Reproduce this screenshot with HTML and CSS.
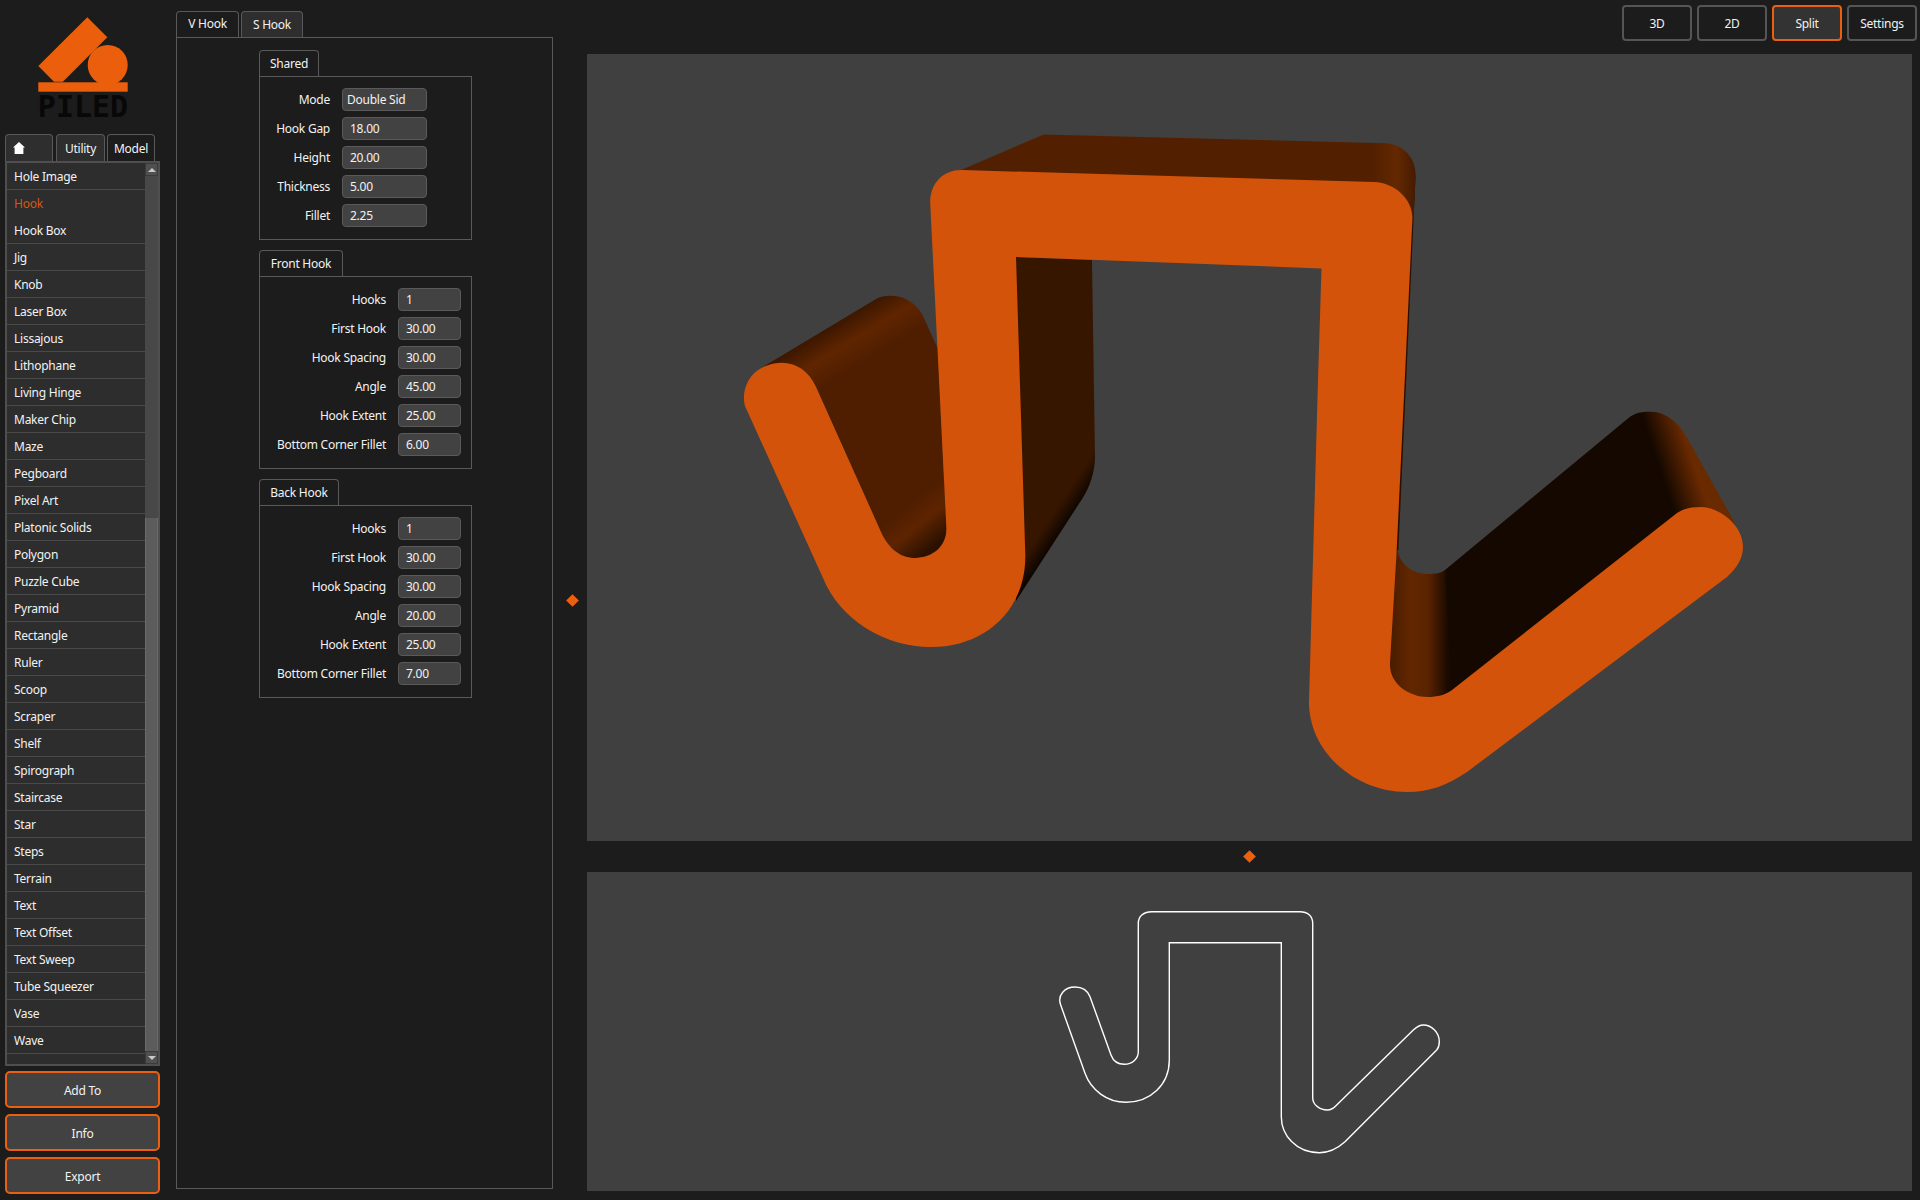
FILE: index.html
```html
<!DOCTYPE html>
<html lang="en">
<head>
  <meta charset="UTF-8">
  <title>PILED</title>
  <link rel="stylesheet" href="styles.css">
</head>
<body>
  <!-- Left column: logo, model list, actions -->
  <div class="left-col">
    <svg class="logo" viewBox="0 0 160 134" width="160" height="134">
      <polygon points="87.3,17.3 107.3,37.3 62.9,81.7 54,81.7 38.3,66" fill="#eb5e0b"/>
      <circle cx="107.7" cy="65" r="20" fill="#eb5e0b"/>
      <rect x="38.3" y="82.3" width="89.4" height="9.4" fill="#eb5e0b"/>
      <text x="83" y="117" class="logo-text" text-anchor="middle">PILED</text>
    </svg>

    <div class="tabs small-tabs">
      <div class="tab off home-tab">
        <svg viewBox="0 0 12 12" width="12" height="12"><path d="M6 0 L12 5.6 L10.4 5.6 L10.4 12 L1.6 12 L1.6 5.6 L0 5.6 Z" fill="#fff"/></svg>
      </div>
      <div class="tab off utility-tab">Utility</div>
      <div class="tab model-tab">Model</div>
    </div>

    <div class="list-frame">
      <div class="list">
        <div class="row">Hole Image</div>
        <div class="row active">Hook</div>
        <div class="row">Hook Box</div>
        <div class="row">Jig</div>
        <div class="row">Knob</div>
        <div class="row">Laser Box</div>
        <div class="row">Lissajous</div>
        <div class="row">Lithophane</div>
        <div class="row">Living Hinge</div>
        <div class="row">Maker Chip</div>
        <div class="row">Maze</div>
        <div class="row">Pegboard</div>
        <div class="row">Pixel Art</div>
        <div class="row">Platonic Solids</div>
        <div class="row">Polygon</div>
        <div class="row">Puzzle Cube</div>
        <div class="row">Pyramid</div>
        <div class="row">Rectangle</div>
        <div class="row">Ruler</div>
        <div class="row">Scoop</div>
        <div class="row">Scraper</div>
        <div class="row">Shelf</div>
        <div class="row">Spirograph</div>
        <div class="row">Staircase</div>
        <div class="row">Star</div>
        <div class="row">Steps</div>
        <div class="row">Terrain</div>
        <div class="row">Text</div>
        <div class="row">Text Offset</div>
        <div class="row">Text Sweep</div>
        <div class="row">Tube Squeezer</div>
        <div class="row">Vase</div>
        <div class="row">Wave</div>
      </div>
      <div class="scrollbar">
        <div class="arrow-btn"><span class="arrow-up"></span></div>
        <div class="groove"></div>
        <div class="handle"></div>
        <div class="arrow-btn"><span class="arrow-down"></span></div>
      </div>
    </div>

    <button class="action-btn">Add To</button>
    <button class="action-btn">Info</button>
    <button class="action-btn">Export</button>
  </div>

  <!-- Centre column: parameters -->
  <div class="params">
    <div class="tabs">
      <div class="tab v-tab">V Hook</div>
      <div class="tab off s-tab">S Hook</div>
    </div>
    <div class="params-frame">
      <div class="group">
        <div class="tab group-tab shared-tab">Shared</div>
        <div class="group-box">
          <div class="field"><label>Mode</label><div class="input combo">Double Sid</div></div>
          <div class="field"><label>Hook Gap</label><div class="input">18.00</div></div>
          <div class="field"><label>Height</label><div class="input">20.00</div></div>
          <div class="field"><label>Thickness</label><div class="input">5.00</div></div>
          <div class="field"><label>Fillet</label><div class="input">2.25</div></div>
        </div>
      </div>

      <div class="group">
        <div class="tab group-tab front-tab">Front Hook</div>
        <div class="group-box wide">
          <div class="field"><label>Hooks</label><div class="input">1</div></div>
          <div class="field"><label>First Hook</label><div class="input">30.00</div></div>
          <div class="field"><label>Hook Spacing</label><div class="input">30.00</div></div>
          <div class="field"><label>Angle</label><div class="input">45.00</div></div>
          <div class="field"><label>Hook Extent</label><div class="input">25.00</div></div>
          <div class="field"><label>Bottom Corner Fillet</label><div class="input">6.00</div></div>
        </div>
      </div>

      <div class="group">
        <div class="tab group-tab back-tab">Back Hook</div>
        <div class="group-box wide">
          <div class="field"><label>Hooks</label><div class="input">1</div></div>
          <div class="field"><label>First Hook</label><div class="input">30.00</div></div>
          <div class="field"><label>Hook Spacing</label><div class="input">30.00</div></div>
          <div class="field"><label>Angle</label><div class="input">20.00</div></div>
          <div class="field"><label>Hook Extent</label><div class="input">25.00</div></div>
          <div class="field"><label>Bottom Corner Fillet</label><div class="input">7.00</div></div>
        </div>
      </div>
    </div>
  </div>

  <div class="v-splitter"><span class="diamond"></span></div>

  <!-- Right column: toolbar and views -->
  <div class="views">
    <div class="toolbar">
      <button class="view-btn">3D</button>
      <button class="view-btn">2D</button>
      <button class="view-btn on">Split</button>
      <button class="view-btn">Settings</button>
    </div>

    <div class="view view-3d">
      <svg viewBox="587 54 1325 787" width="1325" height="787">
        <defs>
          <linearGradient id="topCorner" gradientUnits="userSpaceOnUse" x1="1372" y1="0" x2="1416" y2="0">
            <stop offset="0" stop-color="#522000"/>
            <stop offset="0.55" stop-color="#642800"/>
            <stop offset="1" stop-color="#451b00"/>
          </linearGradient>
          <linearGradient id="leftTip" gradientUnits="userSpaceOnUse" x1="818" y1="333" x2="843" y2="374">
            <stop offset="0" stop-color="#3a1600"/>
            <stop offset="0.5" stop-color="#602500"/>
            <stop offset="1" stop-color="#4f1e00"/>
          </linearGradient>
          <linearGradient id="leftBend" gradientUnits="userSpaceOnUse" x1="920" y1="496" x2="950" y2="533">
            <stop offset="0" stop-color="#4f1e00"/>
            <stop offset="0.45" stop-color="#5e2400"/>
            <stop offset="1" stop-color="#2c1100"/>
          </linearGradient>
          <linearGradient id="midEdge" gradientUnits="userSpaceOnUse" x1="1035" y1="540" x2="1050" y2="550">
            <stop offset="0" stop-color="#371600"/>
            <stop offset="1" stop-color="#0c0500"/>
          </linearGradient>
          <linearGradient id="rightBend" gradientUnits="userSpaceOnUse" x1="1392" y1="0" x2="1452" y2="0">
            <stop offset="0" stop-color="#4a1d00"/>
            <stop offset="0.3" stop-color="#632700"/>
            <stop offset="0.6" stop-color="#5a2300"/>
            <stop offset="0.92" stop-color="#1c0b00"/>
            <stop offset="1" stop-color="#140800"/>
          </linearGradient>
          <linearGradient id="rightTip" gradientUnits="userSpaceOnUse" x1="1636" y1="470" x2="1690" y2="452">
            <stop offset="0" stop-color="#140800"/>
            <stop offset="0.4" stop-color="#140800"/>
            <stop offset="1" stop-color="#6a2a00"/>
          </linearGradient>
        </defs>
        <!-- back faces -->
        <path d="M1415.6 175 L1398.4 550 L1385 560 L1400 200 Z" fill="#2a1000"/>
        <path d="M961 170 L1043.7 134.4 L1385.7 143.2 C1403 144 1416 158 1415.6 175 L1413.5 220 L1380 190 Z" fill="url(#topCorner)"/>
        <path d="M761 368 L876 299 C890 292 912 296 922 314 L938 349 L946.4 528 C947 546 933 558 915 558 L881 532 L816 387 C806 365 786 358 761 368 Z" fill="url(#leftTip)"/>
        <path d="M878 526 L945 470 L946.4 528 C947 546 933 558 915 558 C900 558 888 548 881 532 Z" fill="url(#leftBend)"/>
        <path d="M1016 257 L1092 260 L1095 456 C1095 472 1090 486 1082.7 498 L1016 601 Z" fill="url(#midEdge)"/>
        <path d="M1397.5 550 C1400 564 1412 574 1428 574 C1436 574 1441 573 1445 570 L1460 700 L1428 720 L1380 680 L1385 560 Z" fill="url(#rightBend)"/>
        <path d="M1445 570 L1630 416.7 C1637 412 1644 411.7 1652 411.7 C1666 412 1678 422 1686.7 437 L1735 523.3 L1701 530 L1452 700 Z" fill="url(#rightTip)"/>
        <!-- front face -->
        <path d="M930.3 205 C929 185 942 170 961 170 L1374 182 C1396 183 1413 200 1412.4 219 L1396.7 550 L1390 663 C1389 683 1408 697 1428 697 C1437 697 1445 695 1452 690 L1677 513 C1685 508 1692 507 1702 507 C1720 508 1743 525 1743 547 C1743 558 1737 568 1727 577 L1467 772 C1448 785 1430 792 1407 792 C1355 792 1309 752 1309 702 L1318 380 L1321.5 268.4 L1016 257 L1025.3 555 C1026 610 985 647 931 647 C885 647 840 620 823 578 L745 406 C741 392 748 372 766 366 C786 358 806 365 816 387 L881 532 C888 548 900 558 915 558 C933 558 947 546 946.4 528 Z" fill="#d4530a"/>
      </svg>
    </div>

    <div class="h-splitter"><span class="diamond"></span></div>

    <div class="view view-2d">
      <svg viewBox="587 872 1325 319" width="1325" height="319">
        <path d="M1138.3 923.3 C1138.3 916 1144 911.7 1151.7 911.7 L1300 911.7 C1307.5 911.7 1312.7 916 1312.7 923.3 L1312.7 1098.3 C1313 1105 1320 1110 1327.3 1110 C1331 1110 1334 1108 1336.7 1105 L1413.3 1030 C1416.5 1027 1419.5 1025 1423.3 1025 C1432 1025 1439.3 1033 1439.3 1041.7 C1439.3 1045 1438.5 1048 1436.7 1050 L1345 1141.7 C1338 1148 1329 1152.7 1319.3 1152.7 C1296 1152.7 1281.3 1135 1281.3 1116.7 L1281.3 942.7 L1169.3 942.7 L1169.3 1060 C1169.3 1085 1150 1102.3 1126 1102.3 C1107 1102.3 1091 1090 1085 1073.3 L1060.7 1005 C1057 995 1065 987 1075 987 C1082 987 1087.5 990.5 1090 996.7 L1111 1055 C1113 1060.5 1118 1064.3 1124.3 1064.3 C1132 1064.3 1138.3 1059 1138.3 1051.7 Z" fill="none" stroke="#fff" stroke-width="1.4"/>
      </svg>
    </div>
  </div>
</body>
</html>
```

FILE: styles.css
```css
:root {
  --bg: #1c1c1c;
  --line: #595959;
  --tab-off: #2e2e2e;
  --field: #424242;
  --orange: #eb600f;
  --text: #f2f2f2;
}

* {
  box-sizing: border-box;
}

body {
  margin: 0;
  height: 1200px;
  display: flex;
  overflow: hidden;
  background-color: var(--bg);
  color: var(--text);
  font-family: "Noto Sans", sans-serif;
  font-size: 12px;
  letter-spacing: -0.25px;
}

/* tabs */
.tabs {
  display: flex;
}

.tab {
  height: 26px;
  display: flex;
  align-items: center;
  justify-content: center;
  background-color: var(--bg);
  border: 1px solid var(--line);
  border-bottom: none;
  border-radius: 4px 4px 0 0;
}

.tab.off {
  background-color: var(--tab-off);
}

/* left column */
.left-col {
  width: 160px;
  margin-left: 5px;
  flex-shrink: 0;
}

.logo {
  display: block;
  margin-left: -5px;
}

.logo-text {
  font-family: "DejaVu Sans Mono", monospace;
  font-weight: bold;
  font-size: 30px;
  letter-spacing: 0;
  fill: #080808;
}

.small-tabs .tab {
  height: 27px;
}

.home-tab {
  width: 48px;
  padding-right: 20px;
}

.utility-tab {
  width: 49px;
  margin-left: 3px;
}

.model-tab {
  width: 48px;
  margin-left: 2px;
}

.list-frame {
  width: 155px;
  height: 905px;
  display: flex;
  border: 2px solid #4f4f4f;
  background-color: #2d2d2d;
}

.list {
  width: 138px;
}

.row {
  height: 27px;
  padding-left: 7px;
  line-height: 28px;
  border-bottom: 1px solid #494949;
}

.row.active {
  color: #d9560f;
  border-bottom-color: transparent;
}

.scrollbar {
  width: 13px;
  display: flex;
  flex-direction: column;
  background-color: #3c3c3c;
}

.arrow-btn {
  height: 13px;
  flex-shrink: 0;
  display: flex;
  align-items: center;
  justify-content: center;
  background-color: #505050;
  border: 1px solid #3a3a3a;
}

.arrow-up,
.arrow-down {
  width: 0;
  height: 0;
  border-left: 4px solid transparent;
  border-right: 4px solid transparent;
}

.arrow-up {
  border-bottom: 4px solid #c8c8c8;
}

.arrow-down {
  border-top: 4px solid #c8c8c8;
}

.groove {
  height: 342px;
  background-color: #484848;
}

.handle {
  flex: 1;
  background-color: #5c5c5c;
  border-left: 1px solid #6a6a6a;
  border-right: 1px solid #6a6a6a;
}

.action-btn {
  display: block;
  width: 155px;
  height: 37px;
  margin-top: 6px;
  padding-top: 3px;
  background-color: var(--field);
  color: var(--text);
  border: 2px solid var(--orange);
  border-radius: 5px;
  font: inherit;
  letter-spacing: inherit;
}

.list-frame + .action-btn {
  margin-top: 5px;
}

/* parameter column */
.params {
  width: 377px;
  margin-left: 11px;
  padding-top: 11px;
  flex-shrink: 0;
}

.v-tab {
  width: 63px;
  padding-bottom: 2px;
}

.s-tab {
  width: 62px;
  margin-left: 2px;
}

.params-frame {
  height: 1152px;
  padding: 12px 0 0 82px;
  border: 1px solid var(--line);
}

.group {
  width: 213px;
  margin-bottom: 10px;
}

.group-tab {
  height: 26px;
}

.shared-tab {
  width: 60px;
}

.front-tab {
  width: 84px;
}

.back-tab {
  width: 80px;
}

.group-box {
  display: flex;
  flex-direction: column;
  gap: 6px;
  padding: 11px 44px 12px 12px;
  border: 1px solid var(--line);
}

.field {
  display: flex;
  align-items: center;
  justify-content: flex-end;
}

.field label {
  margin-right: 12px;
  text-align: right;
}

.input {
  width: 85px;
  height: 23px;
  padding-left: 7px;
  line-height: 22px;
  background-color: var(--field);
  border: 1px solid #5a5a5a;
  border-radius: 4px;
}

.input.combo {
  padding-left: 4px;
}

.group-box.wide .input {
  width: 63px;
}

.group-box.wide {
  padding-right: 10px;
}

/* splitters */
.v-splitter {
  width: 34px;
  display: flex;
  align-items: center;
  justify-content: center;
  padding-left: 4px;
  flex-shrink: 0;
}

.diamond {
  width: 9px;
  height: 9px;
  background-color: var(--orange);
  transform: rotate(45deg);
}

.h-splitter {
  height: 31px;
  display: flex;
  align-items: center;
  justify-content: center;
}

/* right column */
.views {
  width: 1325px;
}

.toolbar {
  display: flex;
  justify-content: flex-end;
  gap: 5px;
  height: 36px;
  margin: 5px -5px 13px 0;
}

.view-btn {
  width: 70px;
  height: 36px;
  background-color: var(--bg);
  color: var(--text);
  border: 2px solid #555;
  border-radius: 4px;
  font: inherit;
  letter-spacing: inherit;
}

.view-btn.on {
  background-color: #333;
  border-color: var(--orange);
}

.view {
  background-color: #404040;
}

.view svg {
  display: block;
}

.view-3d {
  height: 787px;
}

.view-2d {
  height: 319px;
}
```
